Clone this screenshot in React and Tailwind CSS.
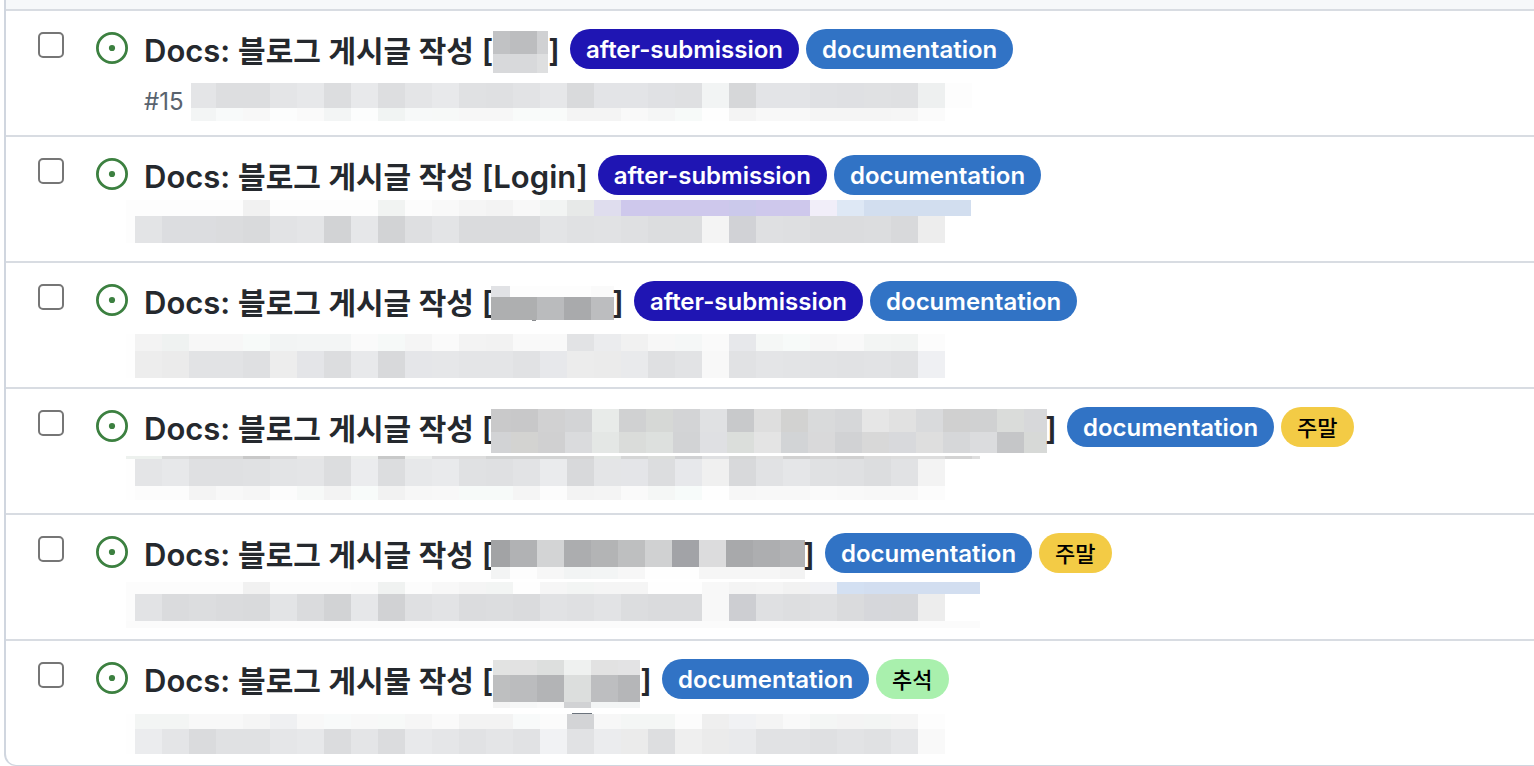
const CELL = 27;

const LABELS = {
  after: { text: "after-submission", style: "bg-[#1f15b3] text-white text-[24px] font-semibold" },
  docs: { text: "documentation", style: "bg-[#3173c5] text-white text-[24px] font-semibold" },
  weekend: { text: "주말", style: "bg-[#f3cb45] text-black text-[22px] font-medium" },
  chuseok: { text: "추석", style: "bg-[#a9f0ad] text-black text-[22px] font-medium" },
};

// strips: y, height, width of the first cell, colours from left to right
const issues = [
  {
    id: 15,
    title: "블로그 게시글 작성",
    number: "#15",
    labels: ["after", "docs"],
    name: {
      width: 55,
      strips: [
        { y: 11, h: 23, first: 17, colors: "c1c2c4 bcbdbf d0d1d3" },
        { y: 34, h: 19, first: 17, colors: "d8d9db d8d9db dedfe0" },
      ],
    },
    meta: {
      width: 781,
      strips: [
        { y: 14, h: 25, first: 25, colors: "e4e5e7 dddee0 dddee0 e4e5e7 e7e8ea dcdddf e8e9eb dddee0 e4e5e7 e8e9eb e0e1e3 dfe0e2 e2e3e5 e6e7e9 d9dadc e3e4e7 e3e4e7 e0e1e4 dfe0e2 f2f4f4 d6d7d9 e3e4e7 e3e4e7 e0e1e4 dfe0e3 e0e1e3 dfe0e2 eef0f0 fdfdfd" },
        { y: 39, h: 13, first: 25, colors: "f3f5f5 f8fafa f8f8f8 fcfdfd fafafa f3f5f5 fcfdfd f1f4f3 f7f9f9 f7f9f8 f7f7f7 f7f7f7 f9fbfa f9fbfa f4f4f4 f4f4f4 f9f9f9 f5f6f6 f7faf9 fefefe f4f4f4 f8f8f8 f8f8f8 f5f5f5 f5f5f5 f5f5f5 f6f6f6 fbfbfb" },
      ],
    },
  },
  {
    id: 14,
    title: "블로그 게시글 작성",
    topic: "Login",
    labels: ["after", "docs"],
    meta: {
      width: 845,
      strips: [
        { y: 5, h: 16, first: 9, colors: "fdfdfd fdfdfd fdfdfd fdfdfd fdfdfd f1f1f1 fdfdfd fdfdfd fdfdfd fdfdfd f1f3f2 fcfcfc f9f9f9 f5f5f5 f3f3f3 f8f8f8 f2f4f3 e7e9e8 dfddee cec8ec cec8ec cec8ec cec8ec cbc9eb cec8ec cec8ec f1eef9 dee8f5 d2deef d2deef d2deef d2deef" },
        { y: 21, h: 27, first: 9, colors: "fdfdfd e3e4e6 dcdde0 dcdde0 dbdcde d9dadc e2e3e5 e4e5e7 d2d3d5 e6e7e9 d2d3d5 dedfe1 e3e4e6 dadbdd dadbdd dadbdd e3e4e6 e0e1e3 e1e2e4 dfe0e2 dcdddf dcdddf f4f4f4 d1d2d6 dfe0e2 dedfe1 dbdcde dbdcde dcdddf d8d9db ededed" },
      ],
    },
  },
  {
    id: 13,
    title: "블로그 게시글 작성",
    labels: ["after", "docs"],
    name: {
      tight: true,
      width: 123,
      strips: [
        { y: 14, h: 11, first: 19, colors: "e1e2e5 fdfdfd fdfdfd fdfdfd fafafa" },
        { y: 25, h: 23, first: 19, colors: "aeafb0 aeafb0 babbbd a9aaac bcbdbf" },
      ],
      marks: [{ x: 41, y: 48, w: 4, h: 1, fill: "#8b8d90" }],
    },
    meta: {
      width: 854,
      strips: [
        { y: 13, h: 17, first: 9, colors: "fefefe f3f3f3 eff2f1 f7f7f7 f7f7f7 f7faf9 f2f4f4 f3f5f5 f3f5f5 fafafa f6f9f8 f5f5f5 fafafa f3f3f3 f2f2f2 f9f9f9 f9f9f9 e2e3e5 ebecee f1f1f1 f7f7f7 f5f7f7 fafafa e7e8eb f5f7f6 f7faf9 f7f7f7 f9f9f9 f3f5f4 f2f4f3 fcfcfc" },
        { y: 30, h: 27, first: 9, colors: "fefefe ededed ebebeb e2e3e5 e2e3e5 dfe0e2 ededed e4e5e8 dcdddf e8e9eb d8d9db e5e6e9 e6e7e9 e4e5e7 e4e5e7 e1e2e4 e7e8eb ececec ebebeb e9eaec dfe0e2 e2e3e5 f8f8f8 e1e2e4 e4e5e7 e3e4e6 e2e3e5 e1e2e4 e2e3e5 e0e1e3 eff0f3" },
      ],
    },
  },
  {
    id: 12,
    title: "블로그 게시글 작성",
    labels: ["docs", "weekend"],
    name: {
      tight: true,
      width: 556,
      strips: [
        { y: 11, h: 23, first: 20, colors: "c9c9ca c8c8c9 d1d1d2 d3d4d6 e8ebe9 d0d1d2 d6d8d6 d3d4d6 e0e1e3 c8c9cb dedede d2d2d1 d9dadb d6d7d9 e6e6e6 e1e1e1 d9dadc d0d0d0 d0d1d2 dadcda d7d8da" },
        { y: 34, h: 21, first: 20, colors: "d2d3d5 d3d3d1 d0d0d1 dadbdd e4e7e5 dadcda dde0de d2d3d5 dfe0e3 dbdedb e4e4e4 d2d4d6 d9d9da d1d2d4 d8d8d8 d8d9dc dedede d6d7d9 dbdcde c5c6c8 d7d9d7" },
      ],
    },
    meta: {
      width: 854,
      strips: [
        { y: 9, h: 3, first: 9, colors: "edf1ee edf1ee dcdddd d8d8d8 d8d8d8 c8c8c8 dadadb e6e6e6 dcdddd eceeed c8c9c9 eceeed dededf dddddd d2d3d3 d2d3d3 d2d3d3 d4d4d4 e3e6e4 d5d6d6 dbdddb d0d1d3 dfe0e2 d5d6d6 e0e0e0 d1d1d1 d5d5d5 d0d0d0 dbdbdb dddddd dddddd d3d3d3 dedede" },
        { y: 12, h: 27, first: 9, colors: "fefefe e4e5e7 e7e8ea dfe0e2 dfe0e2 e0e1e3 e3e4e6 e4e5e7 dcdddf ebecee dcdddf e7e8ea e9eaec e0e1e3 dfe0e2 e2e3e5 eaebed d8d9db e4e5e7 e4e5e8 dcdddf e7e8eb f0f0f0 d8d9db e1e2e4 e5e6e8 e0e1e3 dfe0e2 dcdddf e1e2e4 f3f3f3" },
        { y: 39, h: 14, first: 9, colors: "fefefe fcfcfc fcfcfc f4f4f4 f8f8f8 f6f6f6 fcfcfc f7f9f8 f3f3f3 f8fbfa f2f2f2 f7f7f7 f8f8f8 f7faf9 f7faf9 f5f5f5 fcfcfc f3f3f3 f4f4f4 fafafa f5f7f6 f7fbfa fefefe f7f7f7 f8f8f8 f8f8f8 fafafa f9f9f9 f8f8f8 f8f8f8 fcfcfc" },
      ],
    },
  },
  {
    id: 11,
    title: "블로그 게시글 작성",
    labels: ["docs", "weekend"],
    name: {
      tight: true,
      width: 314,
      strips: [
        { y: 16, h: 27, first: 19, colors: "a2a3a5 b1b2b4 d3d4d5 acadaf b3b4b5 bebfc0 d0d1d2 a2a3a7 dcdcdd a8a9ab adaeb0 b2b3b5" },
        { y: 43, h: 12, first: 19, colors: "f3f4f4 fdfdfd f7f7f7 f2f4f4 f3f5f5 f7f7f7 fefefe fefefe f6f6f6 f6f6f6 f6f6f6 f3f3f3" },
      ],
    },
    meta: {
      width: 854,
      strips: [
        { y: 9, h: 12, first: 9, colors: "fcfcfc fcfcfc fcfcfc fcfcfc fcfcfc f1f1f1 fcfcfc fcfcfc fcfcfc fbfbfb f0f2f1 fcfcfc f8f8f8 f5f5f5 f3f5f4 fefefe f6f6f6 f3f5f4 f5f5f5 f5f5f5 fefefe fefefe f8f8f8 f4f4f4 f5f5f5 f2f2f2 f1f2f5 d3e0f2 d2def0 d2def0 d2def0 d2def0 d2def0" },
        { y: 21, h: 27, first: 9, colors: "fcfcfc e2e3e5 dadbdd dcdddf dadbdd d9dadc e3e4e6 dadbdd d2d3d5 e6e7e9 d1d2d4 dfe0e2 e2e3e5 dbdcde dcdddf dadbdd e1e2e4 dfe0e2 e2e3e5 dcdddf dadbdd dadbdd f8f8f8 cdced2 dfe0e2 dddee0 dfe0e2 dadbdd d6d7db d6d7da ededed" },
        { y: 48, h: 7, first: 854, colors: "fbfbfb" },
      ],
    },
  },
  {
    id: 10,
    title: "블로그 게시물 작성",
    labels: ["docs", "chuseok"],
    name: {
      width: 147,
      strips: [
        { y: 10, h: 15, first: 17, colors: "e2e3e2 e2e2e2 dddfde eff1f0 e2e2e2 e3e3e4" },
        { y: 25, h: 27, first: 17, colors: "bebfc0 bbbcbe b3b4b6 dcdedd bdbec0 b5b6b8" },
        { y: 52, h: 6, first: 17, colors: "f4f4f4 f6f7f7 f9f9f9 d1d2d4 f3f5f5 f3f5f5" },
      ],
    },
    meta: {
      width: 854,
      strips: [
        { y: 15, h: 15, first: 9, colors: "fefefe f3f5f4 f3f5f4 f8f8f8 f8f8f8 f5f5f5 eff0f2 f8f8f8 f8fafa f8f8f8 f7f9f8 f6f6f6 fafafa f3f3f3 f3f3f3 f8fafa fbfbfb d3d4d6 f7f7f7 f4f6f5 f4f6f5 fcfcfc efefef f1f2f4 f4f4f4 f9f9f9 f4f6f5 f4f4f4 f3f5f4 f5f5f5 fdfdfd" },
        { y: 30, h: 25, first: 9, colors: "fefefe ebecee e4e5e7 dadbdd e0e1e3 e0e1e3 e5e6e8 e7e8ea dbdcde e4e5e7 dbdcde e8e9eb e5e6e8 e1e2e4 e4e5e7 e1e2e4 f1f2f4 e1e2e4 ebecee ebebeb dddee0 efefef ebebeb e9eaec e1e2e4 e1e2e4 dfe0e2 e2e3e5 e0e1e3 e5e6e8 f9f9f9" },
      ],
      marks: [{ x: 446, y: 14, w: 20, h: 1, fill: "#6b737c" }],
    },
  },
];

function Mosaic({ width, height, strips, marks = [], className }) {
  return (
    <svg
      width={width}
      height={height}
      shapeRendering="crispEdges"
      aria-hidden="true"
      className={className}
    >
      {strips.map((strip) =>
        strip.colors.split(" ").map((color, i) => (
          <rect
            key={`${strip.y}-${i}`}
            x={i === 0 ? 0 : strip.first + (i - 1) * CELL}
            y={strip.y}
            width={i === 0 ? strip.first : CELL}
            height={strip.h}
            fill={`#${color}`}
          />
        ))
      )}
      {marks.map((m) => (
        <rect key={m.x} x={m.x} y={m.y} width={m.w} height={m.h} fill={m.fill} />
      ))}
    </svg>
  );
}

function OpenIcon() {
  return (
    <svg width="32" height="32" viewBox="0 0 32 32" aria-hidden="true" className="mt-[21px] ml-8 shrink-0">
      <circle cx="16" cy="16" r="14.6" fill="none" stroke="#3c8040" strokeWidth="2.8" />
      <circle cx="16" cy="16" r="3.1" fill="#3c8040" />
    </svg>
  );
}

function IssueRow({ issue }) {
  return (
    <li className="flex items-start border-t-2 border-[#d8dce2] pl-8">
      <input
        type="checkbox"
        aria-label={`Select issue ${issue.id}`}
        className="mt-[21px] size-[26px] shrink-0 appearance-none rounded-[5px] border-2 border-[#767676] bg-white"
      />
      <OpenIcon />
      <div className="ml-4 min-w-0 pt-[18px] pb-[6px]">
        <div className="flex h-10 items-center whitespace-nowrap">
          <a
            href="#issue"
            className="mr-[10px] flex h-10 items-center text-[31px] leading-10 font-semibold text-[#25292e]"
          >
            <span className="pt-1">
              Docs: <span className="text-[30px]">{issue.title}</span> [{issue.topic}
            </span>
            {issue.name && (
              <Mosaic
                {...issue.name}
                height={58}
                className={issue.name.tight ? "-mx-[2px] shrink-0" : "shrink-0"}
              />
            )}
            <span className="pt-1">]</span>
          </a>
          <div className="flex gap-[7px]">
            {issue.labels.map((key) => (
              <a
                key={key}
                href="#label"
                className={`h-10 rounded-full px-4 leading-[42px] ${LABELS[key].style}`}
              >
                {LABELS[key].text}
              </a>
            ))}
          </div>
        </div>
        <div className="flex h-[60px] items-start">
          {issue.number ? (
            <>
              <span className="mt-[17px] mr-[7px] text-[24px] leading-8 text-[#59636e]">{issue.number}</span>
              <Mosaic {...issue.meta} height={60} className="shrink-0" />
            </>
          ) : (
            <Mosaic {...issue.meta} height={60} className="-ml-[18px] shrink-0" />
          )}
        </div>
      </div>
    </li>
  );
}

function App() {
  return (
    <main className="overflow-hidden bg-white pl-1 font-['Inter','Noto_Sans_CJK_KR',sans-serif]">
      <div className="overflow-hidden rounded-bl-xl border-b border-l-2 border-[#d0d6df]">
        <div className="h-[9px] bg-[#f6f8fa]" />
        <ul>
          {issues.map((issue) => (
            <IssueRow key={issue.id} issue={issue} />
          ))}
        </ul>
      </div>
    </main>
  );
}

export default App;
